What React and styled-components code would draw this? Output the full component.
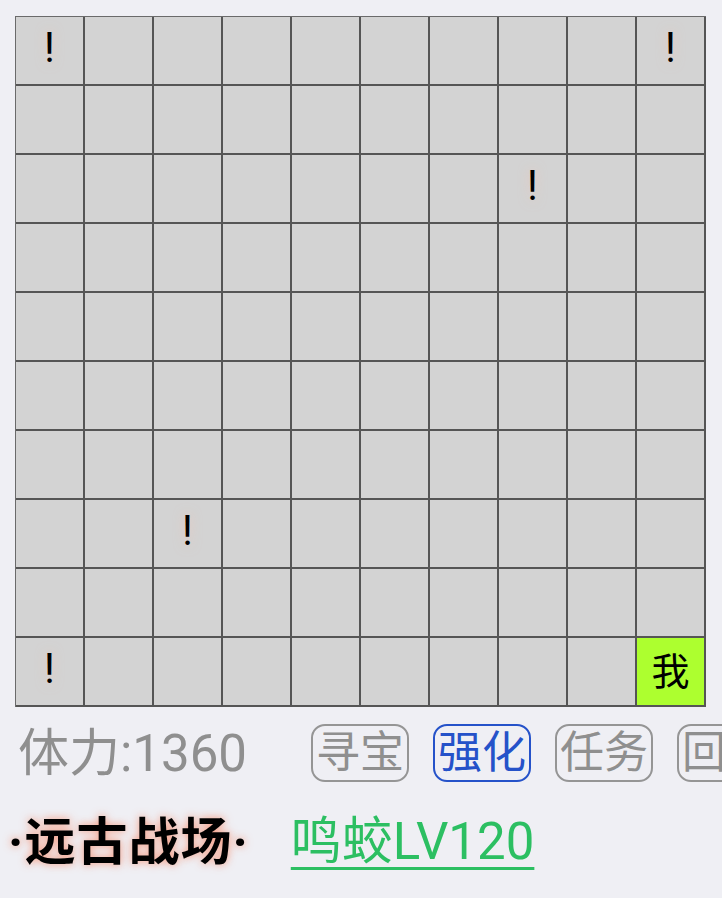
import styled, { createGlobalStyle } from "styled-components";

const GlobalStyle = createGlobalStyle`
  html, body {
    margin: 0;
    padding: 0;
    background: #efeff4;
    overflow: hidden;
  }
  body {
    font-family: Roboto, "Noto Sans CJK SC", sans-serif;
  }
`;

const SIZE = 10;
const marks = ["0-0", "0-9", "2-7", "7-2", "9-0"];
const player = "9-9";

export default function App() {
  const cells = [];
  for (let r = 0; r < SIZE; r++) {
    for (let c = 0; c < SIZE; c++) {
      const key = `${r}-${c}`;
      if (key === player) {
        cells.push(
          <Cell key={key} $me>
            我
          </Cell>
        );
      } else if (marks.includes(key)) {
        cells.push(
          <Cell key={key} $mark>
            !
          </Cell>
        );
      } else {
        cells.push(<Cell key={key} />);
      }
    }
  }

  return (
    <Page>
      <GlobalStyle />
      <Board>{cells}</Board>

      <StatusRow>
        <Stamina>体力:1360</Stamina>
        <Buttons>
          <TabButton>寻宝</TabButton>
          <TabButton $active>强化</TabButton>
          <TabButton>任务</TabButton>
          <TabButton>回城</TabButton>
        </Buttons>
      </StatusRow>

      <InfoRow>
        <MapName>·远古战场·</MapName>
        <MonsterLink href="#">鸣蛟LV120</MonsterLink>
      </InfoRow>
    </Page>
  );
}

const Page = styled.div`
  width: 722px;
  height: 898px;
  padding: 16px 0 0 15px;
  box-sizing: border-box;
  overflow: hidden;
`;

const Board = styled.div`
  display: grid;
  grid-template-columns: repeat(10, 69px);
  grid-auto-rows: 69px;
  width: 691px;
  border-top: 1px solid #6a6a6a;
  border-left: 1px solid #6a6a6a;
  box-sizing: border-box;
`;

const Cell = styled.div`
  display: flex;
  align-items: center;
  justify-content: center;
  padding-bottom: ${(p) => (p.$mark ? "6px" : "0")};
  box-sizing: border-box;
  background: ${(p) => (p.$me ? "#adff2f" : "#d3d3d3")};
  border-right: 2px solid #555;
  border-bottom: 2px solid #555;
  color: #000;
  font-size: ${(p) => (p.$me ? "38px" : "42px")};
  line-height: 1;
  text-shadow: ${(p) => (p.$mark ? "0 0 12px rgba(255, 190, 170, 0.6)" : "none")};
`;

const StatusRow = styled.div`
  display: flex;
  align-items: center;
  margin-top: 16px;
  height: 60px;
  white-space: nowrap;
`;

const Stamina = styled.div`
  flex-shrink: 0;
  width: 296px;
  padding-left: 3px;
  box-sizing: border-box;
  color: #8f8f8f;
  font-size: 51px;
  line-height: 1;
`;

const Buttons = styled.div`
  display: flex;
  flex-shrink: 0;
  gap: 24px;
`;

const TabButton = styled.div`
  flex-shrink: 0;
  width: 98px;
  height: 58px;
  box-sizing: border-box;
  display: flex;
  align-items: center;
  justify-content: center;
  border: 2px solid ${(p) => (p.$active ? "#2552c9" : "#959595")};
  border-radius: 14px;
  color: ${(p) => (p.$active ? "#2552c9" : "#8f8f8f")};
  font-size: 44px;
  line-height: 1;
`;

const InfoRow = styled.div`
  display: flex;
  align-items: center;
  margin-top: 31px;
  margin-left: -7px;
  gap: 42px;
  white-space: nowrap;
`;

const MapName = styled.div`
  color: #000;
  font-size: 51px;
  font-weight: 700;
  letter-spacing: 1px;
  line-height: 1;
  text-shadow: 0 0 9px rgba(248, 130, 95, 0.8);
`;

const MonsterLink = styled.a`
  color: #2cbf62;
  font-size: 51px;
  line-height: 1.1;
  text-decoration: underline;
  text-decoration-thickness: 3px;
  text-underline-offset: 8px;
`;
